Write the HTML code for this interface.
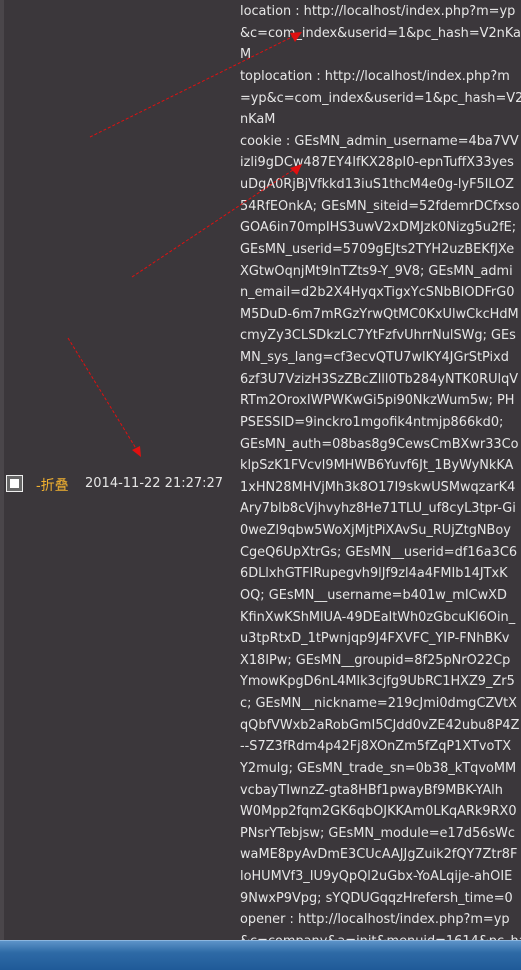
<!DOCTYPE html>
<html><head><meta charset="utf-8"><style>
html,body{margin:0;padding:0;width:521px;height:969px;overflow:hidden;background:#3b373b;}
.l{position:absolute;left:0;top:0;width:4px;height:969px;background:#4a464a;}
.t{position:absolute;left:240px;top:0;font:12.9px "DejaVu Sans","Liberation Sans",sans-serif;color:#e6e6e6;line-height:21.62px;white-space:pre;}
.tb{position:absolute;left:0;top:940px;width:521px;height:29px;background:linear-gradient(#5d93c8,#2e6aa6 40%,#1f5a98);border-top:1px solid #8cb6df;}
.cb{position:absolute;left:6px;top:475px;width:15px;height:15px;border:1.5px solid #eee;background:#666;}
.cb i{position:absolute;left:3px;top:3px;width:9px;height:9px;background:#fff;}
.f{position:absolute;left:36px;top:475px;font:14px "Liberation Sans","Noto Sans CJK SC",sans-serif;color:#f0b030;}
.d{position:absolute;left:85px;top:476px;font:13px "DejaVu Sans",sans-serif;color:#e6e6e6;}
</style></head><body>
<div class="l"></div>
<div class="t" style="top:1px">location : http://localhost/index.php?m=yp
&amp;c=com_index&amp;userid=1&amp;pc_hash=V2nKa
M
toplocation : http://localhost/index.php?m
=yp&amp;c=com_index&amp;userid=1&amp;pc_hash=V2
nKaM
cookie : GEsMN_admin_username=4ba7VV
izli9gDCw487EY4IfKX28pI0-epnTuffX33yes
uDgA0RjBjVfkkd13iuS1thcM4e0g-lyF5lLOZ
54RfEOnkA; GEsMN_siteid=52fdemrDCfxso
GOA6in70mpIHS3uwV2xDMJzk0Nizg5u2fE;
GEsMN_userid=5709gEJts2TYH2uzBEKfJXe
XGtwOqnjMt9lnTZts9-Y_9V8; GEsMN_admi
n_email=d2b2X4HyqxTigxYcSNbBIODFrG0
M5DuD-6m7mRGzYrwQtMC0KxUlwCkcHdM
cmyZy3CLSDkzLC7YtFzfvUhrrNulSWg; GEs
MN_sys_lang=cf3ecvQTU7wlKY4JGrStPixd
6zf3U7VzizH3SzZBcZlll0Tb284yNTK0RUlqV
RTm2OroxIWPWKwGi5pi90NkzWum5w; PH
PSESSID=9inckro1mgofik4ntmjp866kd0;
GEsMN_auth=08bas8g9CewsCmBXwr33Co
klpSzK1FVcvl9MHWB6Yuvf6Jt_1ByWyNkKA
1xHN28MHVjMh3k8O17I9skwUSMwqzarK4
Ary7blb8cVjhvyhz8He71TLU_uf8cyL3tpr-Gi
0weZl9qbw5WoXjMjtPiXAvSu_RUjZtgNBoy
CgeQ6UpXtrGs; GEsMN__userid=df16a3C6
6DLlxhGTFIRupegvh9lJf9zl4a4FMIb14JTxK
OQ; GEsMN__username=b401w_mICwXD
KfinXwKShMlUA-49DEaltWh0zGbcuKl6Oin_
u3tpRtxD_1tPwnjqp9J4FXVFC_YIP-FNhBKv
X18IPw; GEsMN__groupid=8f25pNrO22Cp
YmowKpgD6nL4Mlk3cjfg9UbRC1HXZ9_Zr5
c; GEsMN__nickname=219cJmi0dmgCZVtX
qQbfVWxb2aRobGmI5CJdd0vZE42ubu8P4Z
--S7Z3fRdm4p42Fj8XOnZm5fZqP1XTvoTX
Y2mulg; GEsMN_trade_sn=0b38_kTqvoMM
vcbayTIwnzZ-gta8HBf1pwayBf9MBK-YAlh
W0Mpp2fqm2GK6qbOJKKAm0LKqARk9RX0
PNsrYTebjsw; GEsMN_module=e17d56sWc
waME8pyAvDmE3CUcAAJJgZuik2fQY7Ztr8F
loHUMVf3_IU9yQpQl2uGbx-YoALqije-ahOIE
9NwxP9Vpg; sYQDUGqqzHrefersh_time=0
opener : http://localhost/index.php?m=yp
&amp;c=company&amp;a=init&amp;menuid=1614&amp;pc_ha</div>
<div class="cb"><i></i></div>
<div class="f">-折叠</div>
<div class="d">2014-11-22 21:27:27</div>
<svg style="position:absolute;left:0;top:0" width="521" height="969">
<g stroke="#e01010" stroke-width="1" stroke-dasharray="3,2" fill="none">
<line x1="90" y1="137" x2="296" y2="35"/>
<line x1="132" y1="277" x2="296" y2="168"/>
<line x1="68" y1="338" x2="137" y2="450"/>
</g>
<g fill="#e01010">
<polygon points="302,32 290,33 295,42"/>
<polygon points="302,164 290,168 297,175"/>
<polygon points="141,457 132,450 140,446"/>
</g>
</svg>
<div class="tb"></div>
</body></html>
